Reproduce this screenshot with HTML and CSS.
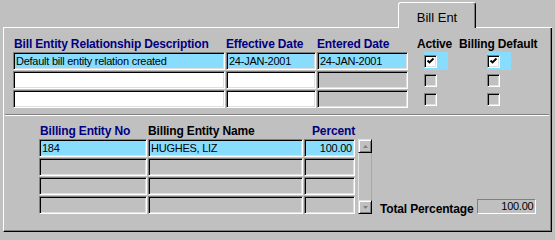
FILE: index.html
```html
<!DOCTYPE html>
<html>
<head>
<meta charset="utf-8">
<link rel="stylesheet" href="styles.css">
</head>
<body>
<div class="window">
  <div class="tabrow">
    <div class="tabrow-line"></div>
    <div class="tab">Bill Ent</div>
    <div class="tabrow-line end"></div>
  </div>
  <div class="panel">
    <div class="upper">
      <div class="hdr navy first">Bill Entity Relationship Description</div>
      <div class="hdr navy">Effective Date</div>
      <div class="hdr navy">Entered Date</div>
      <div class="hdr active-hdr">Active</div>
      <div class="hdr">Billing Default</div>

      <div class="field cyan">Default bill entity relation created</div>
      <div class="field cyan">24-JAN-2001</div>
      <div class="field cyan">24-JAN-2001</div>
      <div class="chk-cell"><div class="chk-hl"><div class="chk on"><svg width="9" height="9" viewBox="0 0 9 9"><path d="M1.5 3.5 L3.5 5.5 L7.5 1.5" fill="none" stroke="#000" stroke-width="1.9"/></svg></div></div></div>
      <div class="chk-cell bd"><div class="chk-hl"><div class="chk on"><svg width="9" height="9" viewBox="0 0 9 9"><path d="M1.5 3.5 L3.5 5.5 L7.5 1.5" fill="none" stroke="#000" stroke-width="1.9"/></svg></div></div></div>

      <div class="field white"></div>
      <div class="field white"></div>
      <div class="field grey"></div>
      <div class="chk-cell"><div class="chk off"></div></div>
      <div class="chk-cell bd"><div class="chk off"></div></div>

      <div class="field white"></div>
      <div class="field white"></div>
      <div class="field grey"></div>
      <div class="chk-cell"><div class="chk off"></div></div>
      <div class="chk-cell bd"><div class="chk off"></div></div>
    </div>

    <div class="sep"></div>

    <div class="lower">
      <div class="lgrid">
        <div class="hdr navy first">Billing Entity No</div>
        <div class="hdr">Billing Entity Name</div>
        <div class="hdr navy right">Percent</div>
        <div class="hdr-spacer"></div>

        <div class="field cyan">184</div>
        <div class="field cyan">HUGHES, LIZ</div>
        <div class="field cyan right">100.00</div>
        <div class="scroll">
          <div class="sbtn"><svg width="5" height="3" viewBox="0 0 5 3"><path d="M2.5 0 L5 3 L0 3Z" fill="#808080"/></svg></div>
          <div class="strack"></div>
          <div class="sbtn"><svg width="5" height="3" viewBox="0 0 5 3"><path d="M0 0 L5 0 L2.5 3Z" fill="#808080"/></svg></div>
        </div>

        <div class="field grey"></div>
        <div class="field grey"></div>
        <div class="field grey"></div>

        <div class="field grey"></div>
        <div class="field grey"></div>
        <div class="field grey"></div>

        <div class="field grey"></div>
        <div class="field grey"></div>
        <div class="field grey"></div>
      </div>
      <div class="total">
        <div class="hdr total-label">Total Percentage</div>
        <div class="tfield">100.00</div>
      </div>
    </div>
  </div>
</div>
</body>
</html>
```
FILE: styles.css
```css
body {
  margin: 0;
  width: 555px;
  height: 234px;
  overflow: hidden;
  background: #c0c0c0;
  font-family: "Liberation Sans", Arial, sans-serif;
  color: #000;
}

.window {
  padding-top: 2px;
}

/* tab strip */
.tabrow {
  display: flex;
  margin-left: 3px;
  width: 549px;
  height: 26px;
}

.tabrow-line {
  flex: 1;
  align-self: flex-end;
  height: 1px;
  background: #fff;
}

.tabrow-line.end {
  flex: 0 0 76px;
}

.tab {
  width: 78px;
  box-sizing: border-box;
  border-top: 1px solid #fff;
  border-left: 1px solid #fff;
  border-right: 1px solid #000;
  box-shadow: inset -1px 0 #808080;
  border-radius: 3px 3px 0 0;
  text-align: center;
  font-size: 13px;
  line-height: 15px;
  padding-top: 7px;
}

/* panel */
.panel {
  margin-left: 3px;
  width: 549px;
  height: 204px;
  box-sizing: border-box;
  border-left: 1px solid #fff;
  border-right: 1px solid #000;
  border-bottom: 1px solid #000;
  box-shadow: inset -1px -1px #808080;
}

.hdr {
  font-size: 12px;
  font-weight: bold;
  letter-spacing: -0.15px;
  line-height: 14px;
  white-space: nowrap;
  color: #000;
}

.hdr.navy {
  color: #000080;
}

.hdr.first {
  padding-left: 1px;
}

.hdr.right {
  text-align: right;
}

.active-hdr {
  padding-left: 8px;
}

.upper {
  display: grid;
  grid-template-columns: 212px 90px 91px 49px 80px;
  grid-template-rows: 14px repeat(3, 18px);
  gap: 1px;
  padding: 9px 0 0 9px;
}

.field {
  box-sizing: border-box;
  height: 18px;
  border: 1px solid;
  border-color: #808080 #fff #fff #808080;
  box-shadow: inset 1px 1px #000, inset -1px -1px #dfdfdf;
  padding: 1px 2px;
  font-size: 11px;
  letter-spacing: -0.25px;
  line-height: 14px;
  white-space: nowrap;
  overflow: hidden;
}

.field.right {
  text-align: right;
}

.cyan {
  background: #88ddff;
}

.white {
  background: #fff;
}

.grey {
  background: #c0c0c0;
}

.chk-cell {
  display: flex;
  align-items: center;
  padding-left: 15px;
}

.chk-cell.bd {
  padding-left: 28px;
}

.chk-hl {
  width: 24px;
  height: 18px;
  background: #88ddff;
  display: flex;
  align-items: center;
}

.chk {
  width: 13px;
  height: 13px;
  box-sizing: border-box;
  border: 1px solid;
  border-color: #808080 #fff #fff #808080;
  box-shadow: inset 1px 1px #000, inset -1px -1px #dfdfdf;
  display: flex;
  align-items: center;
  justify-content: center;
}

.chk.on {
  background: #fff;
}

.chk.off {
  background: #c0c0c0;
}

.chk svg {
  display: block;
}

.sep {
  margin: 6px 2px 0 1px;
  border-top: 1px solid #808080;
  border-bottom: 1px solid #fff;
}

.lower {
  display: flex;
  align-items: flex-end;
  padding: 9px 0 0 35px;
}

.lgrid {
  display: grid;
  grid-template-columns: 108px 155px 51px 16px;
  grid-template-rows: 13px repeat(4, 18px);
  column-gap: 1px;
  row-gap: 1px;
}

.lgrid .hdr {
  line-height: 13px;
}

.scroll {
  grid-column: 4;
  grid-row: span 4;
  justify-self: end;
  width: 14px;
  display: flex;
  flex-direction: column;
}

.sbtn {
  height: 14px;
  box-sizing: border-box;
  border: 1px solid;
  border-color: #dfdfdf #000 #000 #dfdfdf;
  box-shadow: inset 1px 1px #fff, inset -1px -1px #808080;
  display: flex;
  align-items: center;
  justify-content: center;
}

.sbtn svg {
  display: block;
}

.strack {
  flex: 1;
  border-left: 1px solid #e4e4e4;
  border-right: 1px solid #a8a8a8;
}

.total {
  display: flex;
  align-items: flex-end;
  gap: 4px;
  margin-left: 8px;
}

.total-label {
  margin-bottom: -2px;
}

.tfield {
  width: 59px;
  height: 15px;
  box-sizing: border-box;
  border: 1px solid;
  border-color: #808080 #fff #fff #808080;
  font-size: 11px;
  letter-spacing: -0.25px;
  line-height: 13px;
  text-align: right;
  padding-right: 2px;
}
```
